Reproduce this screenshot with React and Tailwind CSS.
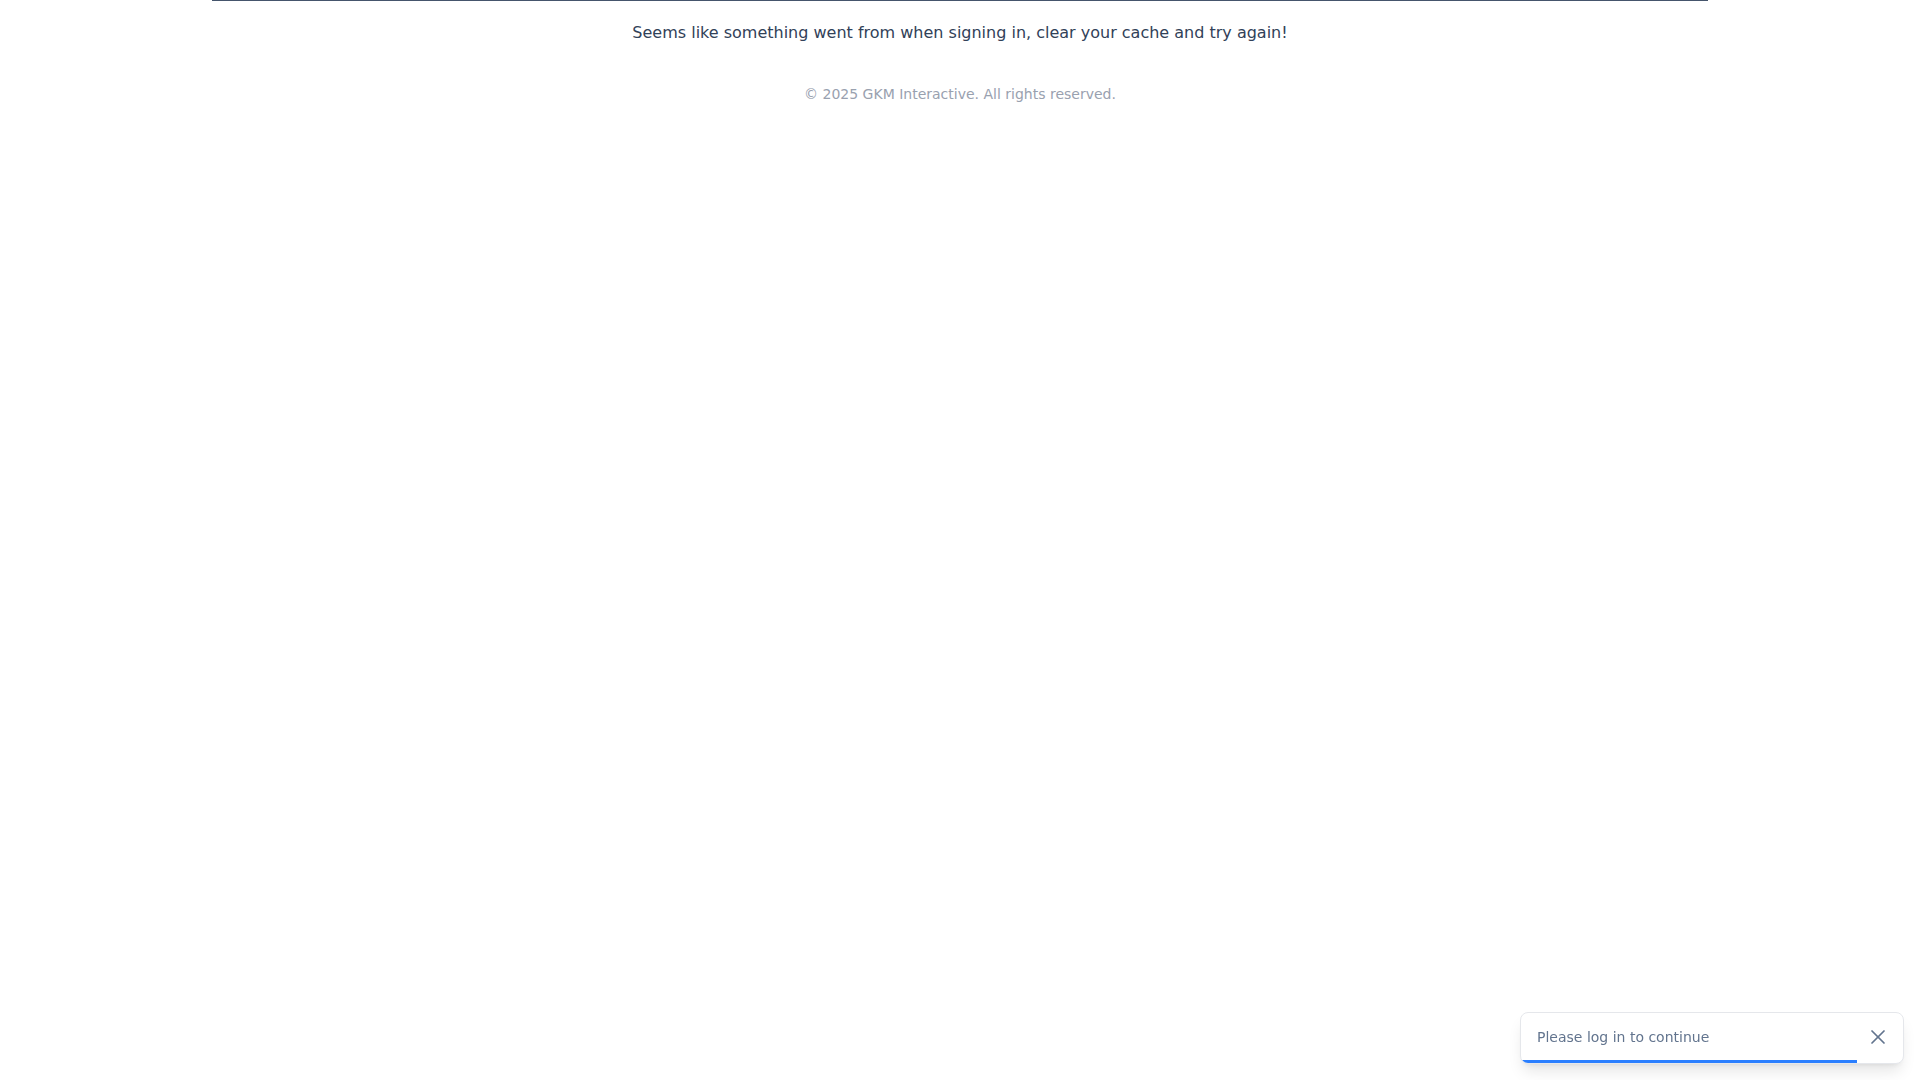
import { X } from 'lucide-react';

const Toast = () => {
  return (
    <div className="fixed bottom-4 right-4 w-[384px] h-[52px] bg-white border border-gray-200 rounded-lg shadow-lg overflow-hidden">
      <div className="flex items-center justify-between h-full pl-4 pr-[13px] pb-[2px]">
        <span className="text-sm text-slate-500">Please log in to continue</span>
        <X className="w-6 h-6 text-slate-500" strokeWidth={1.75} />
      </div>
      {/* progress */}
      <div className="absolute left-0 bottom-0 h-[3px] w-[88%] bg-blue-500" />
    </div>
  );
};

const App = () => {
  return (
    <div className="min-h-screen bg-white font-['DejaVu_Sans',sans-serif]">
      <div className="w-[1496px] mx-auto border-t border-slate-600 pt-5 text-center">
        <p className="text-base text-slate-700">
          Seems like something went from when signing in, clear your cache and try again!
        </p>
        <p className="mt-[39px] text-sm text-gray-400">
          © 2025 GKM Interactive. All rights reserved.
        </p>
      </div>
      <Toast />
    </div>
  );
};

export default App;
